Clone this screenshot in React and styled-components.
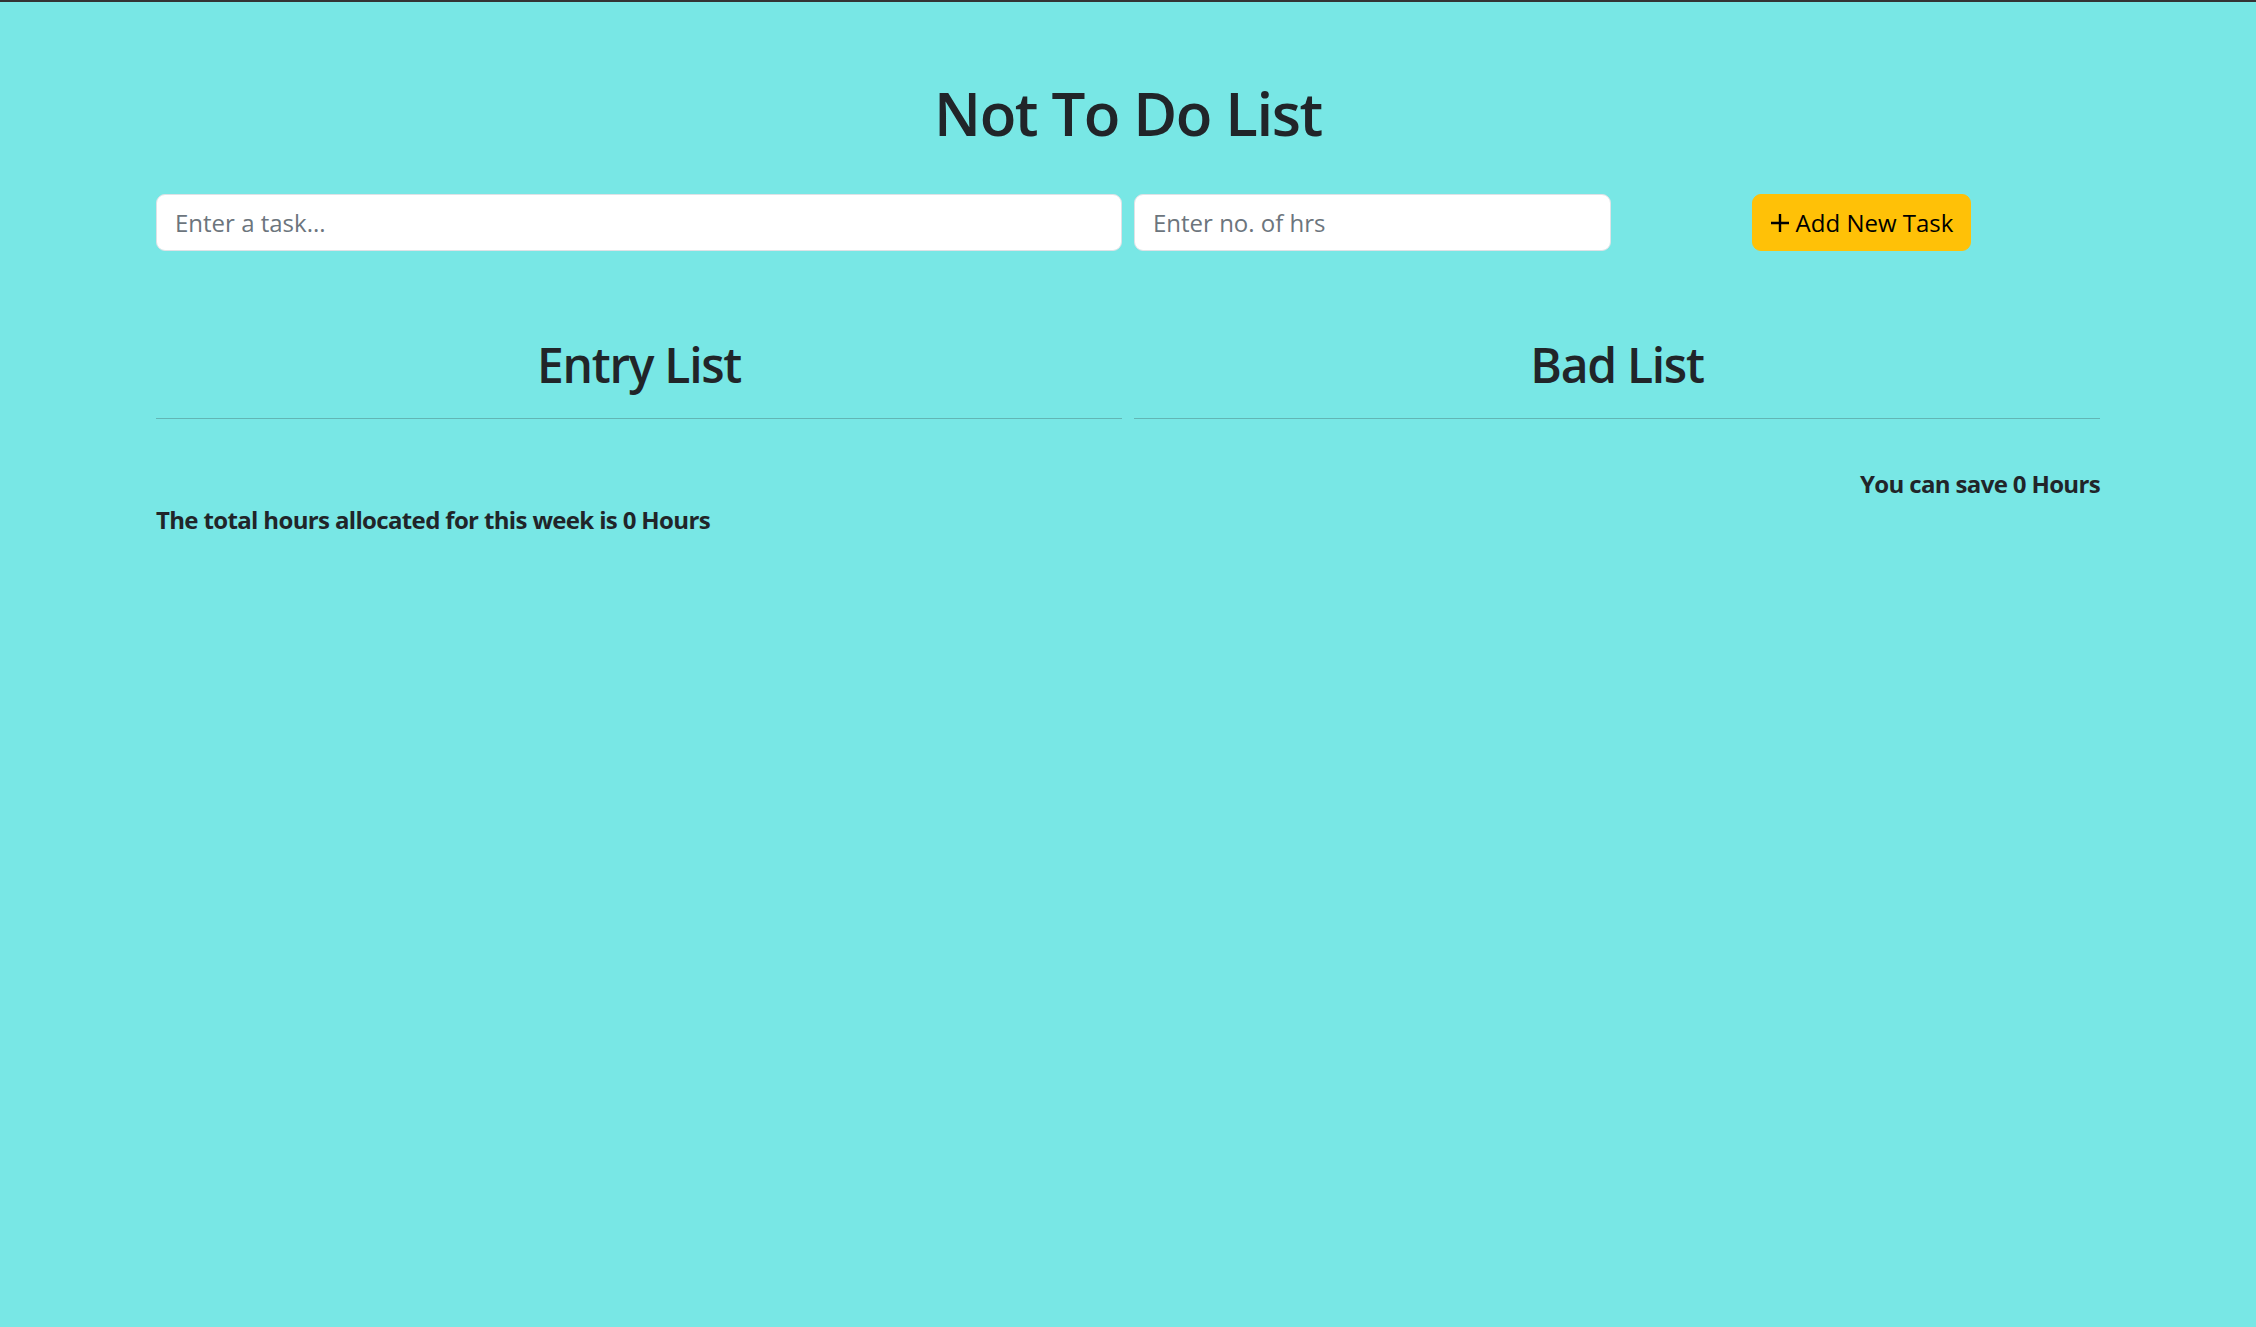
import React, { useState } from 'react';
import styled, { createGlobalStyle } from 'styled-components';

const GlobalStyle = createGlobalStyle`
  * {
    box-sizing: border-box;
  }
  body {
    margin: 0;
    font-family: "Open Sans", "Noto Sans", sans-serif;
    color: #212529;
    background-color: #78e7e5;
  }
`;

const Page = styled.div`
  min-height: 100vh;
  background-color: #78e7e5;
  border-top: 2px solid #343434;
`;

const Container = styled.div`
  max-width: 1980px;
  margin: 0 auto;
  padding: 75px 18px 0;
`;

const Title = styled.h1`
  margin: 0 0 12px;
  font-size: 60px;
  font-weight: 600;
  line-height: 1.2;
  text-align: center;
  letter-spacing: -1.4px;
`;

const Form = styled.form`
  display: grid;
  grid-template-columns: calc(50% - 6px) 1fr 1fr;
  gap: 12px;
  margin-top: 45px;
`;

const Input = styled.input`
  display: block;
  width: 100%;
  height: 57px;
  padding: 9px 18px;
  font-family: inherit;
  font-size: 24px;
  line-height: 1.5;
  color: #212529;
  background-color: #fff;
  border: 1.5px solid #dee2e6;
  border-radius: 9px;
  outline: none;

  &::placeholder {
    color: #6c757d;
  }
`;

const ButtonCell = styled.div`
  display: flex;
  justify-content: center;
`;

const Button = styled.button`
  display: inline-flex;
  align-items: center;
  gap: 6px;
  height: 57px;
  padding: 9px 17px;
  font-family: inherit;
  font-size: 24px;
  line-height: 1.5;
  color: #000;
  background-color: #ffc107;
  border: 1.5px solid #ffc107;
  border-radius: 9px;
  cursor: pointer;

  &:hover {
    background-color: #ffca2c;
  }
`;

const Lists = styled.div`
  display: grid;
  grid-template-columns: 1fr 1fr;
  gap: 12px;
  margin-top: 85px;
`;

const Column = styled.div`
  display: flex;
  flex-direction: column;
`;

const ListTitle = styled.h2`
  margin: 0;
  font-size: 48px;
  font-weight: 600;
  line-height: 1.2;
  text-align: center;
  letter-spacing: -1.3px;
`;

const Rule = styled.hr`
  margin: 24px 0;
  border: 0;
  border-top: 1.5px solid rgba(33, 37, 41, 0.25);
`;

const Table = styled.table`
  width: 100%;
  margin-bottom: 23px;
  border-collapse: collapse;
`;

const Summary = styled.div`
  font-size: 24px;
  font-weight: 700;
  line-height: 1.5;
  letter-spacing: -0.65px;
  text-align: ${(p) => (p.$align === 'end' ? 'right' : 'left')};
`;

const PlusIcon = () => (
  <svg width="20" height="20" viewBox="0 0 20 20" aria-hidden="true">
    <path d="M10 1v18M1 10h18" stroke="#000" strokeWidth="2.4" fill="none" />
  </svg>
);

const App = () => {
  const [task, setTask] = useState('');
  const [hr, setHr] = useState('');
  const [entries] = useState([]);
  const [bad] = useState([]);

  const total = entries.reduce((s, t) => s + Number(t.hr), 0) + bad.reduce((s, t) => s + Number(t.hr), 0);
  const saved = bad.reduce((s, t) => s + Number(t.hr), 0);

  return (
    <Page>
      <GlobalStyle />
      <Container>
        <Title>Not To Do List</Title>
        <Form onSubmit={(e) => e.preventDefault()}>
          <Input
            type="text"
            placeholder="Enter a task..."
            value={task}
            onChange={(e) => setTask(e.target.value)}
          />
          <Input
            type="number"
            placeholder="Enter no. of hrs"
            value={hr}
            onChange={(e) => setHr(e.target.value)}
          />
          <ButtonCell>
            <Button type="submit">
              <PlusIcon />
              Add New Task
            </Button>
          </ButtonCell>
        </Form>

        <Lists>
          <Column>
            <ListTitle>Entry List</ListTitle>
            <Rule />
            <Table>
              <tbody />
            </Table>
          </Column>
          <Column>
            <ListTitle>Bad List</ListTitle>
            <Rule />
            <Table>
              <tbody />
            </Table>
            <Summary $align="end">You can save {saved} Hours</Summary>
          </Column>
        </Lists>
        <Summary>The total hours allocated for this week is {total} Hours</Summary>
      </Container>
    </Page>
  );
};

export default App;
